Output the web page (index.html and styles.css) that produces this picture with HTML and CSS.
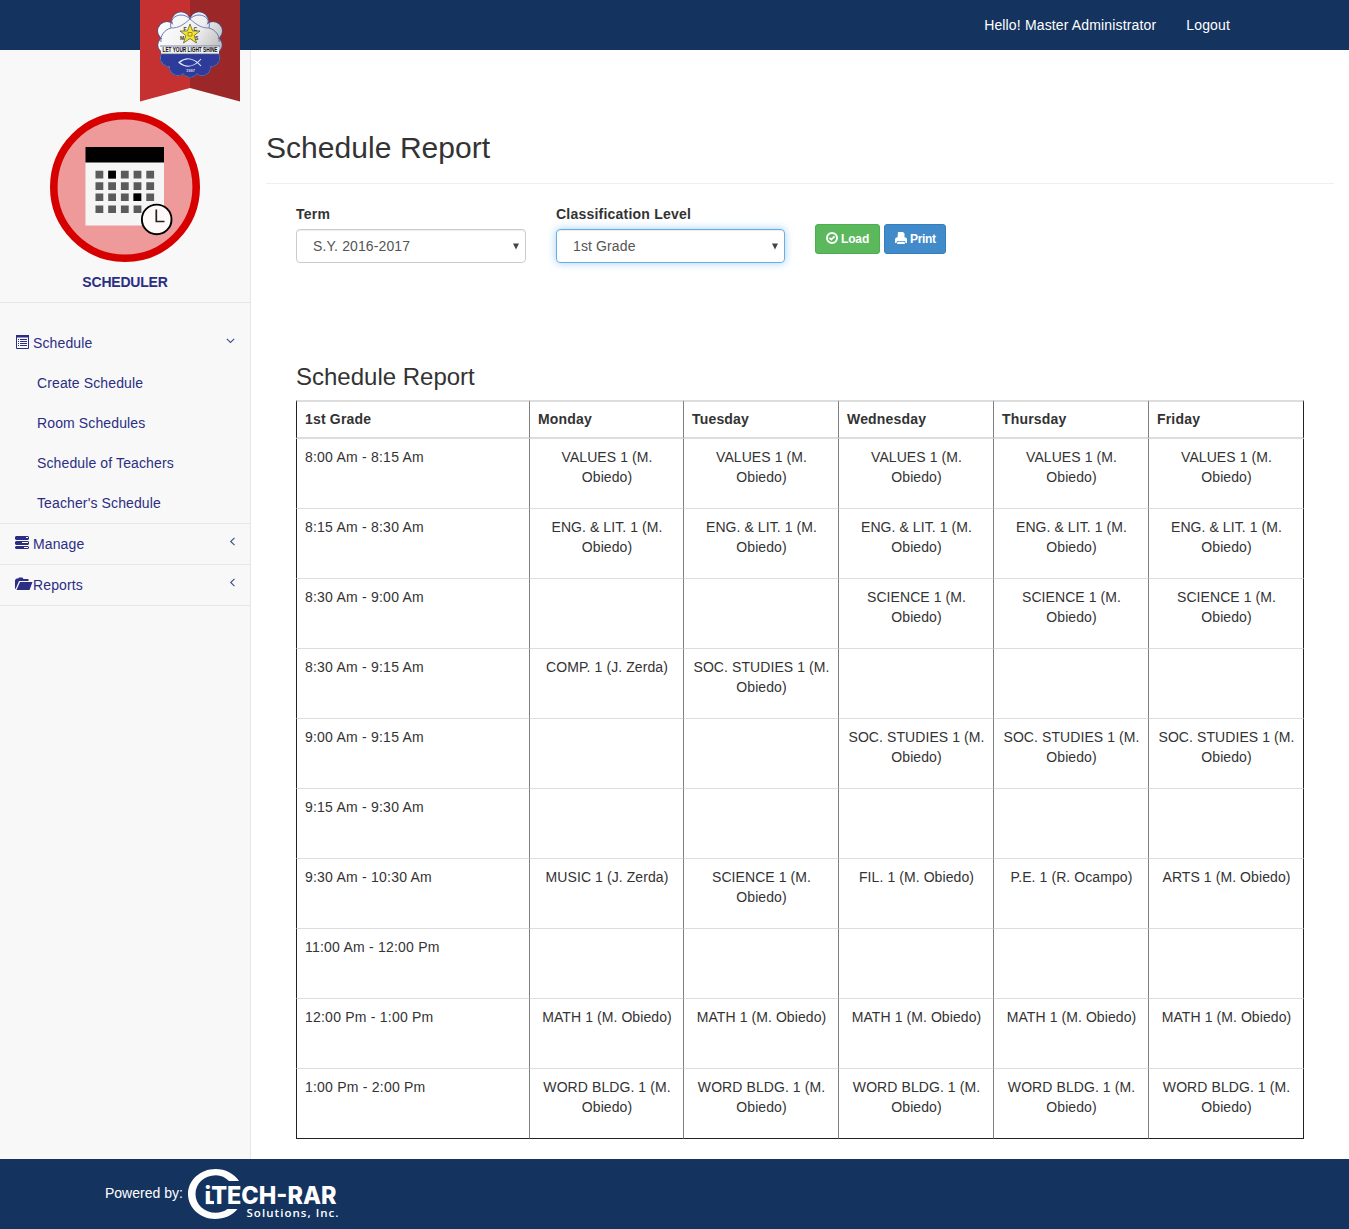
FILE: index.html
```html
<!DOCTYPE html>
<html lang="en">
<head>
<meta charset="utf-8">
<title>Schedule Report</title>
<link rel="stylesheet" href="styles.css">
</head>
<body>
<header class="topbar">
  <svg class="ribbon" width="100" height="102" viewBox="0 0 100 102">
    <defs>
      <linearGradient id="silver" gradientUnits="userSpaceOnUse" x1="20" y1="20" x2="85" y2="60"><stop offset="0" stop-color="#fff"/><stop offset=".5" stop-color="#eee"/><stop offset="1" stop-color="#aaa"/></linearGradient>
      <clipPath id="lower"><rect x="10" y="54" width="80" height="30"/></clipPath>
      <g id="petals"><circle cx="41" cy="21" r="8.800"/><circle cx="59" cy="21" r="8.800"/><circle cx="73" cy="31" r="9"/><circle cx="27" cy="31" r="9"/><circle cx="74" cy="45" r="7.800"/><circle cx="26" cy="45" r="7.800"/><circle cx="71" cy="58" r="8.500"/><circle cx="29" cy="58" r="8.500"/><circle cx="38" cy="67" r="8.500"/><circle cx="62" cy="67" r="8.500"/><circle cx="50" cy="69" r="8.200"/><circle cx="50" cy="45" r="25"/></g>
    </defs>
    <path d="M0 0H50V88L0 101.500Z" fill="#c53030"/><path d="M50 0H100V101.500L50 88Z" fill="#9c2729"/>
    <use href="#petals" fill="none" stroke="#49548c" stroke-width="1.600"/>
    <use href="#petals" fill="url(#silver)"/>
    <use href="#petals" fill="#2d3c9b" clip-path="url(#lower)"/>
    <path d="M21 42C20 36 24 30 31 28C29 20 35 15 41 15C45 15 48 17 50 19C52 17 55 15 59 15C65 15 71 20 69 28C76 30 80 36 79 42" fill="none" stroke="#6874b7"/>
    <path d="M31 28C39 28 43 25 50 19C57 25 61 28 69 28" fill="none" stroke="#7983bb"/>
    <path d="M50 24L52.600 31H60L54.200 35.500L56.500 43L50 38.500L43.500 43L45.800 35.500L40 31H47.400Z" fill="#f4e52d" stroke="#555027" stroke-width=".7"/>
    <g class="seal-text"><text x="43.500" y="31" font-size="5">F</text><text x="53.500" y="31" font-size="5">C</text><text x="40" y="40" font-size="5">M</text><text x="55" y="40" font-size="5">S</text></g>
    <path d="M48 32.500H52V36H48Z" fill="none" stroke="#8a7d24" stroke-width=".8"/>
    <rect x="21" y="46" width="58" height="8" fill="#eee"/><path d="M20 46H80M20 54H80" stroke="#505a8f" stroke-width=".7"/>
    <text x="22.500" y="52.400" class="motto" textLength="55" lengthAdjust="spacingAndGlyphs">LET YOUR LIGHT SHINE</text>
    <path d="M61 59C55 66 47 69 39 62.500C47 56 55 59 61 66" fill="none" stroke="#e5e9ff" stroke-width="1.100"/>
    <text x="46" y="71.500" class="year">1997</text>
  </svg>
  <nav class="account"><a>Hello! Master Administrator</a><a>Logout</a></nav>
</header>
<div class="body">
  <aside class="sidebar">
    <div class="module">
      <svg width="150" height="150" viewBox="0 0 150 150">
        <circle cx="75" cy="75" r="71.200" fill="#ef9a9a" stroke="#d60000" stroke-width="7.600"/>
        <path d="M35.500 50H114V113.500H35.500Z" fill="#f5f5f5"/><path d="M35.500 35H114V50.500H35.500Z"/>
        <g fill="none" stroke="#5b5b5b" stroke-width="7.600"><path d="M45.500 62.600H105" stroke-dasharray="7.800 4.900"/><path d="M45.500 74.100H105" stroke-dasharray="7.800 4.900"/><path d="M45.500 85.200H105" stroke-dasharray="7.800 4.900"/><path d="M45.500 97.300H92" stroke-dasharray="7.800 4.900"/></g>
        <path d="M58.300 58.800h7.600v7.600h-7.600zM83.500 81.400h7.600v7.600h-7.600z"/>
        <circle cx="106.700" cy="107.400" r="14.800" fill="#fff9f9" stroke="#000" stroke-width="1.900"/>
        <path d="M106.300 97.500V109.500H114.500" fill="none" stroke="#222" stroke-width="1.700"/>
      </svg>
      <strong>SCHEDULER</strong>
    </div>
    <ul class="menu">
      <li class="open">
        <a><svg class="ico" width="18" height="14" viewBox="0 0 18 14"><path d="M1.500 .5H13.500V13.500H1.500Z" fill="none" stroke="#2b2e83"/><path d="M1 0H14V2.500H1Z"/><path d="M3 4.500h1M5 4.500h7M3 6.500h1M5 6.500h7M3 8.500h1M5 8.500h7M3 10.500h1M5 10.500h7" stroke="#2b2e83"/></svg>Schedule<svg class="chev" width="9" height="6" viewBox="0 0 9 6"><path d="M.8 .8L4.500 4.500L8.200 .8"/></svg></a>
        <ul><li><a>Create Schedule</a></li><li><a>Room Schedules</a></li><li><a>Schedule of Teachers</a></li><li><a>Teacher's Schedule</a></li></ul>
      </li>
      <li><a><svg class="ico" width="18" height="14" viewBox="0 0 18 14"><path d="M1 0H13L14 1V3L13 4H1L0 3V1ZM1 5H13L14 6V8L13 9H1L0 8V6ZM1 10H13L14 11V12L13 13H1L0 12V11Z"/><path d="M11 1.500H13M7 6.500H13M9 11.500H13" stroke="#fff"/></svg>Manage<svg class="chev side" width="6" height="9" viewBox="0 0 6 9"><path d="M5.500 .8L1.700 4.500L5.500 8.200"/></svg></a></li>
      <li><a><svg class="ico" width="18" height="14" viewBox="0 0 18 14"><path d="M0 12V3L1.500 1.500H3L4 .5H7.500L8.500 2H13.500V4H4L.8 11.500ZM5 5H17.500L14.500 13H1.500Z"/></svg>Reports<svg class="chev side" width="6" height="9" viewBox="0 0 6 9"><path d="M5.500 .8L1.700 4.500L5.500 8.200"/></svg></a></li>
    </ul>
  </aside>
  <main class="content">
    <h1>Schedule Report</h1>
    <form class="filters">
      <div class="field"><label>Term</label><div class="picker">S.Y. 2016-2017<svg width="6" height="7" viewBox="0 0 6 7"><path d="M0 .5H6L3 6.500Z"/></svg></div></div>
      <div class="field"><label>Classification Level</label><div class="picker focused">1st Grade<svg width="6" height="7" viewBox="0 0 6 7"><path d="M0 .5H6L3 6.500Z"/></svg></div></div>
      <div class="actions">
        <button type="button" class="btn load"><svg width="12" height="12" viewBox="0 0 12 12"><circle cx="6" cy="6" r="5" fill="none" stroke="#fff" stroke-width="2"/><path d="M3.500 5.900L5.300 7.600L8.600 4.300" fill="none" stroke="#fff" stroke-width="1.800"/></svg>Load</button>
        <button type="button" class="btn print"><svg width="12" height="12" viewBox="0 0 12 12" fill="#fff"><path d="M3 0H8L9.500 1.500V5.500H2.500ZM1 5.500H11L12 7V11H10.500L10 9H2L1.500 11H0V7ZM2.500 9.800H9.500L10 12H2Z"/></svg>Print</button>
      </div>
    </form>
    <section class="report">
      <h2>Schedule Report</h2>
      <table>
        <colgroup><col class="time"><col class="mon"><col><col><col><col class="fri"></colgroup>
        <thead><tr><th>1st Grade</th><th>Monday</th><th>Tuesday</th><th>Wednesday</th><th>Thursday</th><th>Friday</th></tr></thead>
        <tbody>
          <tr><td>8:00 Am - 8:15 Am</td><td>VALUES 1 (M. Obiedo)</td><td>VALUES 1 (M. Obiedo)</td><td>VALUES 1 (M. Obiedo)</td><td>VALUES 1 (M. Obiedo)</td><td>VALUES 1 (M. Obiedo)</td></tr>
          <tr><td>8:15 Am - 8:30 Am</td><td>ENG. &amp; LIT. 1 (M. Obiedo)</td><td>ENG. &amp; LIT. 1 (M. Obiedo)</td><td>ENG. &amp; LIT. 1 (M. Obiedo)</td><td>ENG. &amp; LIT. 1 (M. Obiedo)</td><td>ENG. &amp; LIT. 1 (M. Obiedo)</td></tr>
          <tr><td>8:30 Am - 9:00 Am</td><td></td><td></td><td>SCIENCE 1 (M. Obiedo)</td><td>SCIENCE 1 (M. Obiedo)</td><td>SCIENCE 1 (M. Obiedo)</td></tr>
          <tr><td>8:30 Am - 9:15 Am</td><td>COMP. 1 (J. Zerda)</td><td>SOC. STUDIES 1 (M. Obiedo)</td><td></td><td></td><td></td></tr>
          <tr><td>9:00 Am - 9:15 Am</td><td></td><td></td><td>SOC. STUDIES 1 (M. Obiedo)</td><td>SOC. STUDIES 1 (M. Obiedo)</td><td>SOC. STUDIES 1 (M. Obiedo)</td></tr>
          <tr><td>9:15 Am - 9:30 Am</td><td></td><td></td><td></td><td></td><td></td></tr>
          <tr><td>9:30 Am - 10:30 Am</td><td>MUSIC 1 (J. Zerda)</td><td>SCIENCE 1 (M. Obiedo)</td><td>FIL. 1 (M. Obiedo)</td><td>P.E. 1 (R. Ocampo)</td><td>ARTS 1 (M. Obiedo)</td></tr>
          <tr><td>11:00 Am - 12:00 Pm</td><td></td><td></td><td></td><td></td><td></td></tr>
          <tr><td>12:00 Pm - 1:00 Pm</td><td>MATH 1 (M. Obiedo)</td><td>MATH 1 (M. Obiedo)</td><td>MATH 1 (M. Obiedo)</td><td>MATH 1 (M. Obiedo)</td><td>MATH 1 (M. Obiedo)</td></tr>
          <tr><td>1:00 Pm - 2:00 Pm</td><td>WORD BLDG. 1 (M. Obiedo)</td><td>WORD BLDG. 1 (M. Obiedo)</td><td>WORD BLDG. 1 (M. Obiedo)</td><td>WORD BLDG. 1 (M. Obiedo)</td><td>WORD BLDG. 1 (M. Obiedo)</td></tr>
        </tbody>
      </table>
    </section>
  </main>
</div>
<footer class="footer">
  <span>Powered by:</span>
  <svg width="152" height="50" viewBox="0 0 152 50">
    <path d="M51 12C46 4.500 37.500 0 27.500 0C12.500 0 0 11 0 25S12.500 50 27 50C36 50 44.500 46.500 49.500 40H39.500C36 42.500 32 43.800 28 43.800C16 43.800 7.500 35.500 7.500 25S16 6.200 28 6.200C33 6.200 37.500 8.500 41 12Z" fill="#fff"/>
    <text x="16.500" y="35" class="brand" textLength="132" lengthAdjust="spacingAndGlyphs">iTECH-RAR</text>
    <path d="M18 33.500H26" stroke="#fff" stroke-width="3.200"/>
    <text x="58.500" y="47.800" class="brand-sub" textLength="92">Solutions, Inc.</text>
  </svg>
</footer>
</body>
</html>
```
FILE: styles.css
```css
* { box-sizing: border-box; }
body { margin: 0; min-height: 1229px; display: flex; flex-direction: column; font: 14px/20px "Liberation Sans", Arial, sans-serif; color: #333; background: #fff; }
ul { list-style: none; margin: 0; padding: 0; }
.topbar { position: relative; height: 50px; background: #15335f; }
.ribbon { position: absolute; left: 140px; top: 0; z-index: 2; }
.seal-text text { font-weight: bold; fill: #39391f; }
.motto { font-size: 6.5px; font-weight: bold; fill: #111; }
.year { font-size: 4px; font-weight: bold; fill: #dde; }
.account { display: flex; justify-content: flex-end; gap: 30px; padding: 15px 119px 0 0; color: #fff; letter-spacing: .15px; }
.body { display: flex; flex: 1; }
.sidebar { width: 251px; background: #f8f8f8; border-right: 1px solid #e7e7e7; color: #2b2e83; }
.module { height: 253px; padding-top: 62px; border-bottom: 1px solid #e7e7e7; display: flex; flex-direction: column; align-items: center; gap: 10px; letter-spacing: -.2px; }
.module svg { flex: none; }
.menu { padding-top: 20px; }
.menu > li { border-bottom: 1px solid #e7e7e7; }
.menu a { display: flex; align-items: center; height: 40px; padding: 0 15px; letter-spacing: .12px; }
.menu ul a { padding-left: 37px; }
.ico { fill: #2b2e83; margin-top: -3px; }
.chev { margin: -5px 0 0 auto; fill: none; stroke: #3d5085; stroke-width: 1.1; }
.side { margin-top: -6px; }
.content { flex: 1; padding: 80px 15px 0; }
h1 { margin: 0; height: 54px; font-size: 30px; font-weight: 400; line-height: 36px; border-bottom: 1px solid #eee; letter-spacing: .05px; }
.filters { display: flex; gap: 30px; padding: 20px 30px 0; height: 176px; }
.field { width: 230px; }
.field + .field { width: 229px; }
label { display: block; height: 25px; font-weight: bold; letter-spacing: .22px; }
.picker { display: flex; align-items: center; justify-content: space-between; height: 34px; padding: 0 6px 0 16px; border: 1px solid #ccc; border-radius: 4px; color: #555; letter-spacing: .12px; box-shadow: inset 0 1px 1px rgba(0,0,0,.075); }
.picker svg { fill: #444; }
.focused { border-color: #66afe9; box-shadow: inset 0 1px 1px rgba(0,0,0,.075), 0 0 8px rgba(102,175,233,.6); }
.actions { display: flex; gap: 4px; padding-top: 20px; }
.btn { display: flex; align-items: center; gap: 3px; width: 65px; height: 30px; padding: 0 10px; border: 1px solid #4cae4c; border-radius: 3px; background: #5cb85c; color: #fff; font: bold 12px/18px "Liberation Sans", Arial, sans-serif; letter-spacing: -.15px; }
.btn svg { flex: none; margin-top: -2px; }
.print { width: 62px; background: #428bca; border-color: #357ebd; letter-spacing: -.35px; }
.report { padding: 0 30px 20px; }
h2 { margin: 0; height: 40px; padding-top: 4px; font-size: 24px; font-weight: 400; line-height: 26px; }
table { width: 1008px; table-layout: fixed; border-spacing: 0; }
.time { width: 233px; }
.mon { width: 154px; }
col { width: 155px; }
.fri { width: 156px; }
th { padding: 7px 8px 8px; height: 39px; text-align: left; border: solid #ddd; border-width: 2px 0 2px 1px; border-left-color: #808080; letter-spacing: .18px; }
td { height: 70px; padding: 8px 7px 8px 8px; vertical-align: top; text-align: center; border: solid #ddd; border-width: 0 0 1px 1px; border-left-color: #808080; letter-spacing: .08px; }
td:first-child { text-align: left; letter-spacing: .22px; }
th:first-child, td:first-child { border-left-color: #222; }
th:last-child, td:last-child { border-right: 1px solid #222; }
tbody tr:last-child td { border-bottom-color: #222; }
.footer { display: flex; align-items: flex-start; gap: 5px; height: 70px; padding: 10px 105px; background: #15335f; color: #fff; }
.footer span { padding-top: 14px; }
.footer svg { overflow: visible; }
.brand { font: 800 24px Inter, sans-serif; fill: #fff; }
.brand-sub { font: 600 11.5px "Open Sans", sans-serif; fill: #fff; }
```
